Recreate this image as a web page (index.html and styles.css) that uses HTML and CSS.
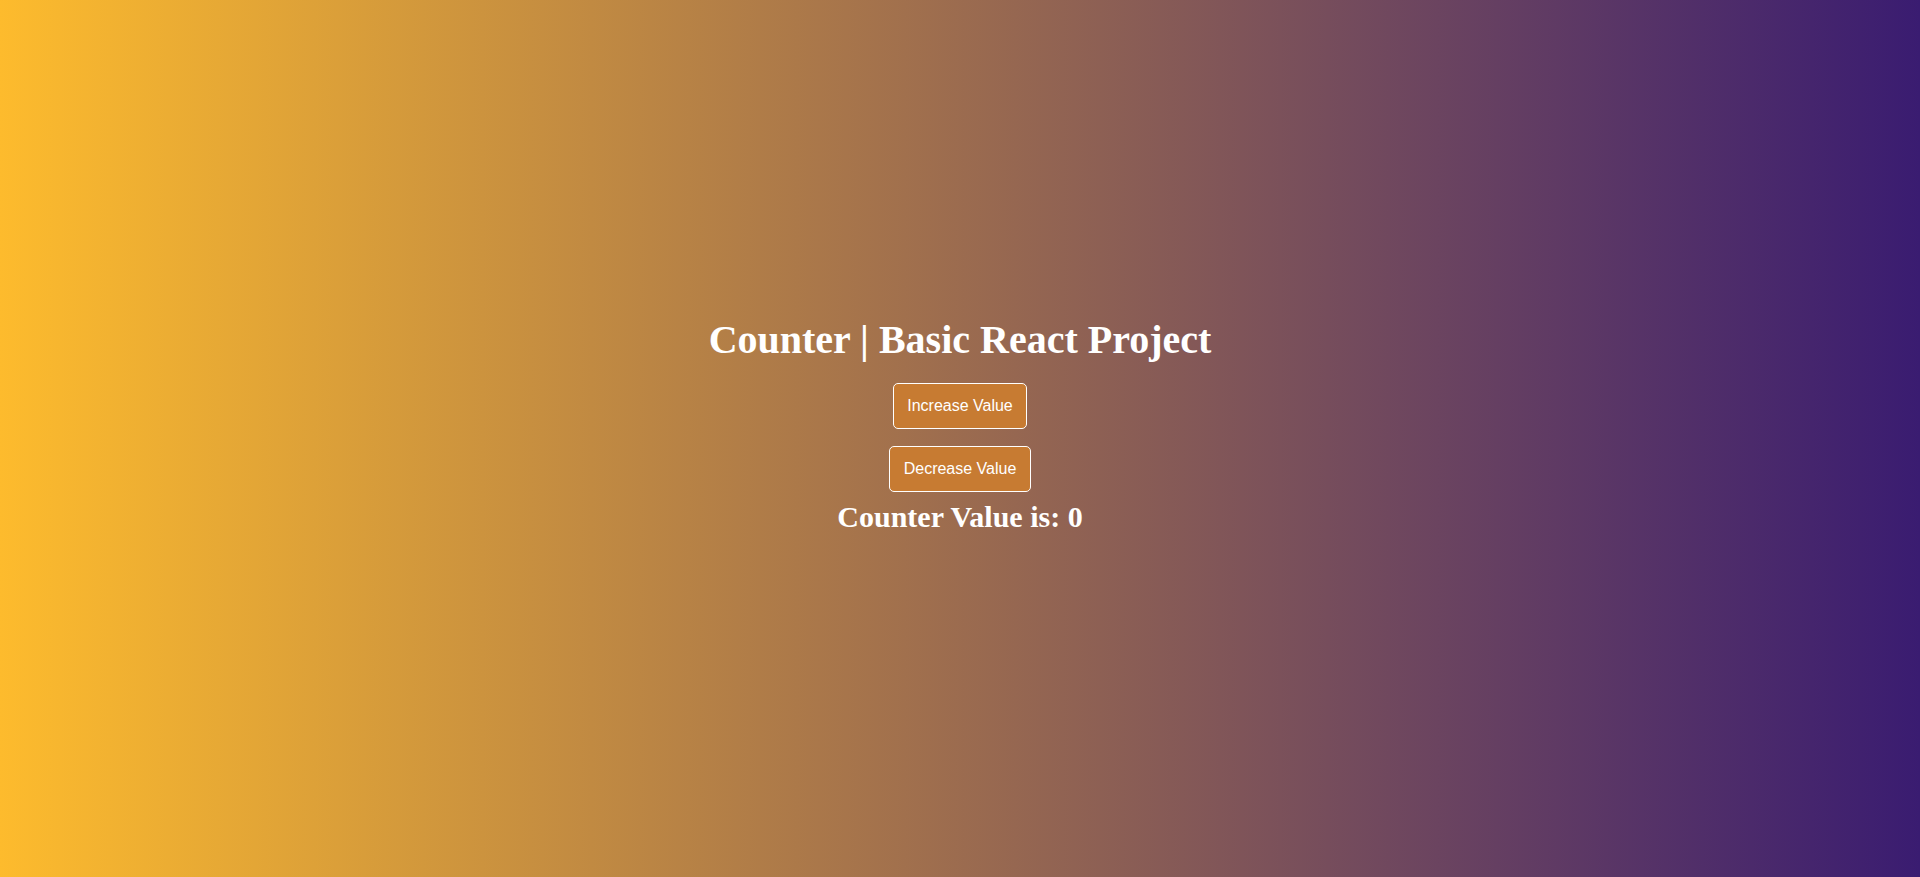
FILE: index.html
```html
<!DOCTYPE html>
<html lang="en">
<head>
<meta charset="utf-8">
<title>Counter | Basic React Project</title>
<link rel="stylesheet" href="styles.css">
</head>
<body>
<div class="app">
  <h1 class="title">Counter | Basic React Project</h1>
  <button class="btn">Increase Value</button>
  <button class="btn btn-second">Decrease Value</button>
  <h2 class="value">Counter Value is: 0</h2>
</div>
</body>
</html>
```
FILE: styles.css
```css
html, body {
  margin: 0;
  padding: 0;
}
body {
  background: linear-gradient(to right, #fdbb2d, #3a1c71);
  font-family: "Liberation Serif", "Times New Roman", serif;
  color: #fff;
}
.app {
  min-height: 100vh;
  box-sizing: border-box;
  padding-bottom: 28px;
  display: flex;
  flex-direction: column;
  align-items: center;
  justify-content: center;
}
.title {
  font-size: 40px;
  font-weight: bold;
  margin: 0 0 20px;
}
.btn {
  font-family: "Liberation Sans", Arial, sans-serif;
  font-size: 16px;
  color: #fff;
  background: #c77b32;
  border: 1px solid #fff;
  border-radius: 5px;
  padding: 13px 13.5px;
  cursor: pointer;
}
.btn-second {
  margin-top: 17px;
}
.value {
  font-size: 30px;
  font-weight: bold;
  margin: 8px 0 0;
}
```
